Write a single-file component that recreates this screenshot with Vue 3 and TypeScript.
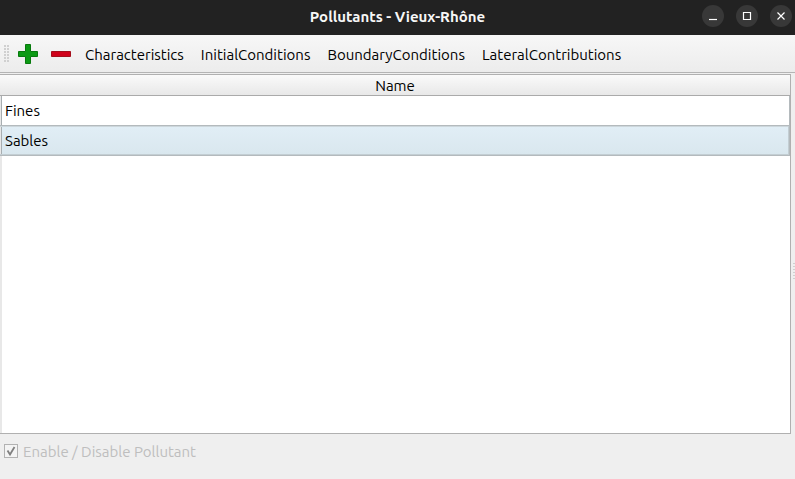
<script setup lang="ts">
import { ref } from 'vue'

interface Pollutant {
  name: string
  enabled: boolean
}

const pollutants = ref<Pollutant[]>([
  { name: 'Fines', enabled: true },
  { name: 'Sables', enabled: true },
])
const selected = ref(1)
const actions = ['Characteristics', 'InitialConditions', 'BoundaryConditions', 'LateralContributions']
</script>

<template>
  <div class="window">
    <header class="titlebar">
      <h1 class="title">Pollutants - Vieux-Rhône</h1>
      <div class="controls">
        <button class="control" type="button" aria-label="Minimize">
          <svg viewBox="0 0 22 22"><path d="M7 14.5h8" /></svg>
        </button>
        <button class="control" type="button" aria-label="Maximize">
          <svg viewBox="0 0 22 22"><path d="M7.5 7.5h7v7h-7z" /></svg>
        </button>
        <button class="control" type="button" aria-label="Close">
          <svg viewBox="0 0 22 22"><path d="M7.5 7.5l7 7M14.5 7.5l-7 7" /></svg>
        </button>
      </div>
    </header>

    <nav class="toolbar">
      <span class="grip"></span>
      <button class="tool" type="button" aria-label="Add">
        <svg viewBox="0 0 20 20">
          <path d="M7.5 .5h5v7h7v5h-7v7h-5v-7h-7v-5h7z" fill="#0c9a14" stroke="#087a0d" />
        </svg>
      </button>
      <button class="tool" type="button" aria-label="Delete">
        <svg viewBox="0 0 20 20">
          <path d="M.5 7.5h19v5H.5z" fill="#d0021b" stroke="#a50f1c" />
        </svg>
      </button>
      <div class="actions">
        <button v-for="action in actions" :key="action" class="action" type="button">{{ action }}</button>
      </div>
    </nav>

    <main class="content">
      <div class="list">
        <table class="table">
          <thead>
            <tr><th scope="col">Name</th></tr>
          </thead>
          <tbody>
            <tr
              v-for="(pollutant, index) in pollutants"
              :key="pollutant.name"
              :class="{ selected: index === selected }"
              @click="selected = index"
            >
              <td>{{ pollutant.name }}</td>
            </tr>
          </tbody>
        </table>
      </div>
      <div class="splitter"><span class="handle"></span></div>
    </main>

    <footer class="footer">
      <label class="enable">
        <input type="checkbox" checked disabled />
        <span>Enable / Disable Pollutant</span>
      </label>
    </footer>
  </div>
</template>

<style>
body {
  margin: 0;
}
</style>

<style scoped>
.window {
  display: flex;
  flex-direction: column;
  height: 100vh;
  background: #efefef;
  color: #000;
  font: 15px/20px Ubuntu, "Noto Sans", sans-serif;
}
button {
  margin: 0;
  padding: 0;
  border: 0;
  background: none;
  color: inherit;
  font: inherit;
}
svg {
  display: block;
  width: 100%;
  height: 100%;
}
.titlebar {
  display: grid;
  grid-template-columns: 1fr auto 1fr;
  align-items: center;
  flex: none;
  height: 35px;
  padding-bottom: 3px;
  box-sizing: border-box;
  background: #222;
  color: #f7f7f7;
}
.title {
  grid-column: 2;
  margin: 0;
  padding-top: 2px;
  font-size: 15px;
  font-weight: 700;
}
.controls {
  display: flex;
  justify-content: flex-end;
  gap: 12px;
  padding-right: 3px;
}
.control {
  width: 22px;
  height: 22px;
  border-radius: 50%;
  background: #383838;
}
.control path {
  fill: none;
  stroke: #fff;
  stroke-width: 1.2;
}
.toolbar {
  display: flex;
  align-items: center;
  flex: none;
  height: 38px;
  box-sizing: border-box;
  gap: 13px;
  padding-left: 4px;
  border-bottom: 1px solid #b4b4b4;
  background: linear-gradient(#f7f7f7, #ececec);
}
.grip {
  width: 5px;
  height: 18px;
  margin-right: -4px;
  background: radial-gradient(circle at 1px 1px, #d0d0d0 1px, transparent 1px) 0 0 / 3px 3px;
}
.tool {
  width: 20px;
  height: 20px;
}
.actions {
  display: flex;
  gap: 17px;
  padding: 3px 0 0 1px;
}
.content {
  display: flex;
  flex: 1;
  min-height: 0;
  padding-top: 1px;
}
.list {
  flex: 1;
  border: 1px solid #b0b0b0;
  border-left: 0;
  background: linear-gradient(to right, #e8e8e8 2px, #fff 2px);
}
.table {
  width: 100%;
  border-collapse: separate;
  border-spacing: 0;
}
th {
  padding: 2px 0 0;
  border-bottom: 1px solid #aaa;
  background: linear-gradient(#fafafa, #e8e8e8);
  font-weight: 400;
  line-height: 18px;
}
td {
  height: 29px;
  padding: 0 5px;
  border: solid #b4babd;
  border-width: 0 1px 1px 0;
  background: linear-gradient(to right, #e8e8e8 1px, #a8aeb1 1px 2px, transparent 2px);
}
.selected td {
  background:
    linear-gradient(to right, #e8e8e8 1px, #a8aeb1 1px 2px, transparent 2px),
    linear-gradient(#e1eef6, #d9e7ee);
  box-shadow: inset -1px -1px #c3ced3, inset 0 1px #cdd7dc;
}
.splitter {
  display: flex;
  align-items: center;
  justify-content: flex-end;
  width: 4px;
}
.handle {
  width: 2px;
  height: 16px;
  margin-top: 34px;
  background: repeating-linear-gradient(#cfcfcf 0 1px, transparent 1px 3px);
}
.footer {
  flex: none;
  height: 45px;
  padding: 8px 4px;
  box-sizing: border-box;
}
.enable {
  display: inline-flex;
  align-items: center;
  gap: 5px;
  color: #bebebe;
}
.enable input {
  appearance: none;
  width: 14px;
  height: 14px;
  margin: 0 0 2px;
  border: 1px solid #b2b2b2;
  background: #f4f4f4;
}
.enable input:checked {
  background: #f4f4f4 url("data:image/svg+xml,%3Csvg xmlns='http://www.w3.org/2000/svg' viewBox='0 0 12 12'%3E%3Cpath d='M2.5 5.5L5 9.5 9.5 2' fill='none' stroke='%23808080' stroke-width='1.8'/%3E%3C/svg%3E") center / 12px no-repeat;
}
</style>
